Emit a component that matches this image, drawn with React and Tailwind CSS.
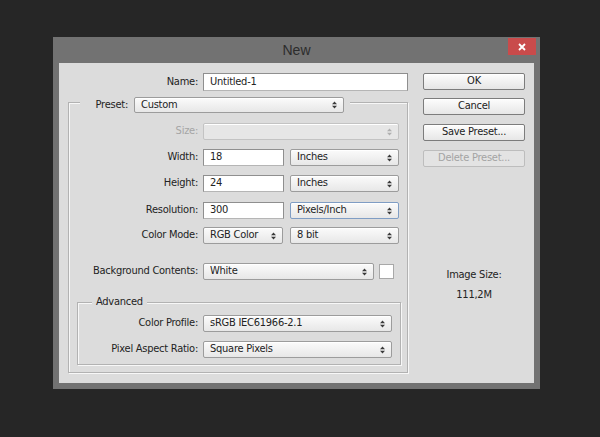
import clsx from 'clsx';

const font = "font-['DejaVu_Sans_Condensed','Liberation_Sans',sans-serif]";

const Arrows = ({ disabled }) => (
  <svg width="5" height="8" viewBox="0 0 5 8" className="shrink-0">
    <path d="M0 3.3 L2.5 0.5 L5 3.3Z M0 4.7 L2.5 7.5 L5 4.7Z" fill={disabled ? '#b0b0b0' : '#3a3a3a'} />
  </svg>
);

const Select = ({ value, className, disabled, focused }) => (
  <div
    className={clsx(
      'flex items-center h-full rounded-[2px] border pl-[6px] pr-[6px] shadow-[inset_0_1px_0_#ffffff]',
      disabled
        ? 'bg-[#e6e6e6] border-[#c3c3c3]'
        : 'bg-gradient-to-b from-[#fbfbfb] to-[#e7e7e7]',
      !disabled && (focused ? 'border-[#7f9dc4]' : 'border-[#9c9c9c]'),
      className
    )}
  >
    <span className="flex-1 truncate">{value}</span>
    <Arrows disabled={disabled} />
  </div>
);

const Input = ({ value, className }) => (
  <div className={clsx('flex items-center h-full bg-white border border-[#8f8f8f] border-b-[#b5b5b5] pl-[6px]', className)}>
    {value}
  </div>
);

const Button = ({ children, disabled, className }) => (
  <div
    className={clsx(
      'flex items-center justify-center h-[17px] w-[102px] rounded-[2px] border',
      disabled
        ? 'bg-[#e3e3e3] border-[#bdbdbd] text-[#a3a3a3]'
        : 'bg-gradient-to-b from-[#fdfdfd] to-[#e6e6e6] border-[#7c7c7c] text-[#222] shadow-[inset_0_1px_0_#ffffff]',
      className
    )}
  >
    {children}
  </div>
);

const Row = ({ label, labelW = 'w-[134px]', disabled, className, children }) => (
  <div className={clsx('flex items-center h-[17px]', className)}>
    <span className={clsx('shrink-0 text-right pr-[5px]', labelW, disabled && 'text-[#a5a5a5]')}>{label}</span>
    {children}
  </div>
);

export default function App() {
  return (
    <div className={clsx('w-[600px] h-[437px] bg-[#262626] pt-[37px] pl-[53px] text-[11px] tracking-[-0.25px] text-[#232323]', font)}>
      <div className="w-[487px] bg-[#727272] px-[6px] pb-[6px]">
        {/* title bar */}
        <div className="relative h-[26px] flex items-center justify-center">
          <span className="text-[14px] tracking-normal text-[#2c2c2c] font-['Liberation_Sans',sans-serif]">New</span>
          <div className="absolute top-[1px] right-[-2px] w-[28px] h-[17px] bg-[#c94b4b] flex items-center justify-center">
            <svg width="8" height="8" viewBox="0 0 8 8">
              <path d="M1 1 L7 7 M7 1 L1 7" stroke="#ffffff" strokeWidth="1.8" />
            </svg>
          </div>
        </div>

        {/* body */}
        <div className="h-[320px] bg-[#dcdcdc] flex">
          <div className="w-[364px] pt-[10px]">
            <div className="flex items-center h-[18px]">
              <span className="w-[144px] shrink-0 text-right pr-[5px]">Name:</span>
              <Input value="Untitled-1" className="w-[205px]" />
            </div>

            {/* preset group */}
            <div className="mt-[11px] ml-[9px] w-[340px] flex flex-col border border-[#b2b2b2] shadow-[1px_1px_0_#f7f7f7,inset_1px_1px_0_#f7f7f7] pb-[7px]">
              <div className="-mt-[6px] ml-[11px] self-start flex items-center h-[16px] bg-[#dcdcdc] pr-[6px]">
                <span className="w-[48px] text-right">Preset:</span>
                <Select value="Custom" className="ml-[6px] w-[210px]" />
              </div>

              <Row label="Size:" disabled className="mt-[10px]">
                <Select value="" disabled className="w-[196px]" />
              </Row>
              <Row label="Width:" className="mt-[9px]">
                <Input value="18" className="w-[81px]" />
                <Select value="Inches" className="ml-[6px] w-[109px]" />
              </Row>
              <Row label="Height:" className="mt-[9px]">
                <Input value="24" className="w-[81px]" />
                <Select value="Inches" className="ml-[6px] w-[109px]" />
              </Row>
              <Row label="Resolution:" className="mt-[10px]">
                <Input value="300" className="w-[81px]" />
                <Select value="Pixels/Inch" focused className="ml-[6px] w-[109px]" />
              </Row>
              <Row label="Color Mode:" className="mt-[8px]">
                <Select value="RGB Color" className="w-[80px]" />
                <Select value="8 bit" className="ml-[7px] w-[109px]" />
              </Row>
              <Row label="Background Contents:" className="mt-[19px]">
                <Select value="White" className="w-[171px]" />
                <div className="ml-[5px] w-[15px] h-[15px] bg-white border border-[#a8a8a8]" />
              </Row>

              {/* advanced group */}
              <div className="mt-[22px] ml-[8px] w-[324px] flex flex-col border border-[#b2b2b2] shadow-[1px_1px_0_#f7f7f7,inset_1px_1px_0_#f7f7f7] pb-[6px]">
                <div className="-mt-[8px] ml-[14px] self-start h-[14px] px-[4px] bg-[#dcdcdc] flex items-center">
                  Advanced
                </div>
                <Row label="Color Profile:" labelW="w-[125px]" className="mt-[6px]">
                  <Select value="sRGB IEC61966-2.1" className="w-[189px]" />
                </Row>
                <Row label="Pixel Aspect Ratio:" labelW="w-[125px]" className="mt-[9px]">
                  <Select value="Square Pixels" className="w-[189px]" />
                </Row>
              </div>
            </div>
          </div>

          {/* buttons */}
          <div className="w-[102px] pt-[10px] flex flex-col">
            <Button>OK</Button>
            <Button className="mt-[8px]">Cancel</Button>
            <Button className="mt-[9px]">Save Preset...</Button>
            <Button disabled className="mt-[9px]">Delete Preset...</Button>
            <div className="mt-[101px] h-[14px] flex items-center justify-center">Image Size:</div>
            <div className="mt-[6px] h-[14px] flex items-center justify-center">111,2M</div>
          </div>
        </div>
      </div>
    </div>
  );
}
